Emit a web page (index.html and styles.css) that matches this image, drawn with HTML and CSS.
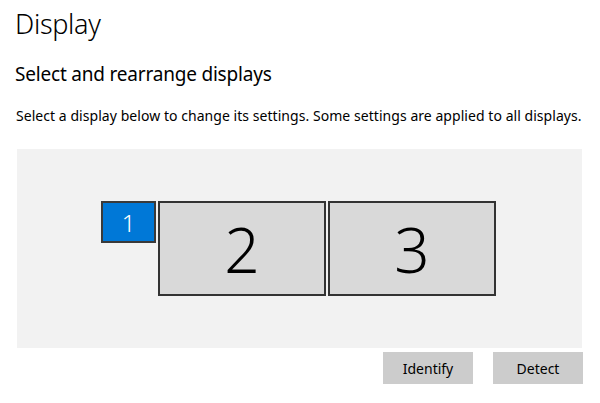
FILE: index.html
```html
<!DOCTYPE html>
<html>
<head>
<meta charset="utf-8">
<link rel="stylesheet" href="styles.css">
</head>
<body>
<div class="page">
  <h1 class="title">Display</h1>
  <h2 class="subtitle">Select and rearrange displays</h2>
  <p class="desc">Select a display below to change its settings. Some settings are applied to all displays.</p>
  <div class="canvas">
    <div class="mon mon1">1</div>
    <div class="mon mon2">2</div>
    <div class="mon mon3">3</div>
  </div>
  <div class="actions">
    <button class="btn">Identify</button>
    <button class="btn">Detect</button>
  </div>
</div>
</body>
</html>
```
FILE: styles.css
```css
html, body {
  margin: 0;
  padding: 0;
  background: #ffffff;
}
.page {
  font-family: "Noto Sans", "Open Sans", sans-serif;
  color: #000;
  padding: 0 0 0 15px;
  width: 568px;
}
.title {
  margin: 0;
  padding-top: 4px;
  font-size: 27px;
  font-weight: 300;
  line-height: 40px;
  letter-spacing: -0.3px;
}
.subtitle {
  margin: 17px 0 0 0;
  font-size: 19px;
  font-weight: 400;
  line-height: 26px;
  letter-spacing: -0.2px;
}
.desc {
  margin: 19px 0 0 1px;
  font-size: 14px;
  line-height: 20px;
  letter-spacing: 0.05px;
  white-space: nowrap;
}
.canvas {
  position: relative;
  margin: 23px 0 0 2px;
  width: 565px;
  height: 199px;
  background: #f2f2f2;
}
.mon {
  position: absolute;
  box-sizing: border-box;
  border: 2px solid #333333;
  background: #d9d9d9;
  display: flex;
  align-items: center;
  justify-content: center;
  font-weight: 300;
  color: #000;
}
.mon1 {
  left: 84px;
  top: 52px;
  width: 55px;
  height: 42px;
  background: #0078d7;
  color: #fff;
  font-size: 24px;
  border-color: #3a3a3a;
}
.mon2 {
  left: 141px;
  top: 52px;
  width: 168px;
  height: 95px;
  font-size: 62px;
}
.mon3 {
  left: 311px;
  top: 52px;
  width: 168px;
  height: 95px;
  font-size: 62px;
}
.actions {
  display: flex;
  justify-content: flex-end;
  gap: 20px;
  margin-top: 4px;
}
.btn {
  width: 90px;
  height: 32px;
  border: none;
  background: #cccccc;
  font-family: "Noto Sans", "Open Sans", sans-serif;
  font-size: 14px;
  color: #000;
  padding: 0;
}
```
